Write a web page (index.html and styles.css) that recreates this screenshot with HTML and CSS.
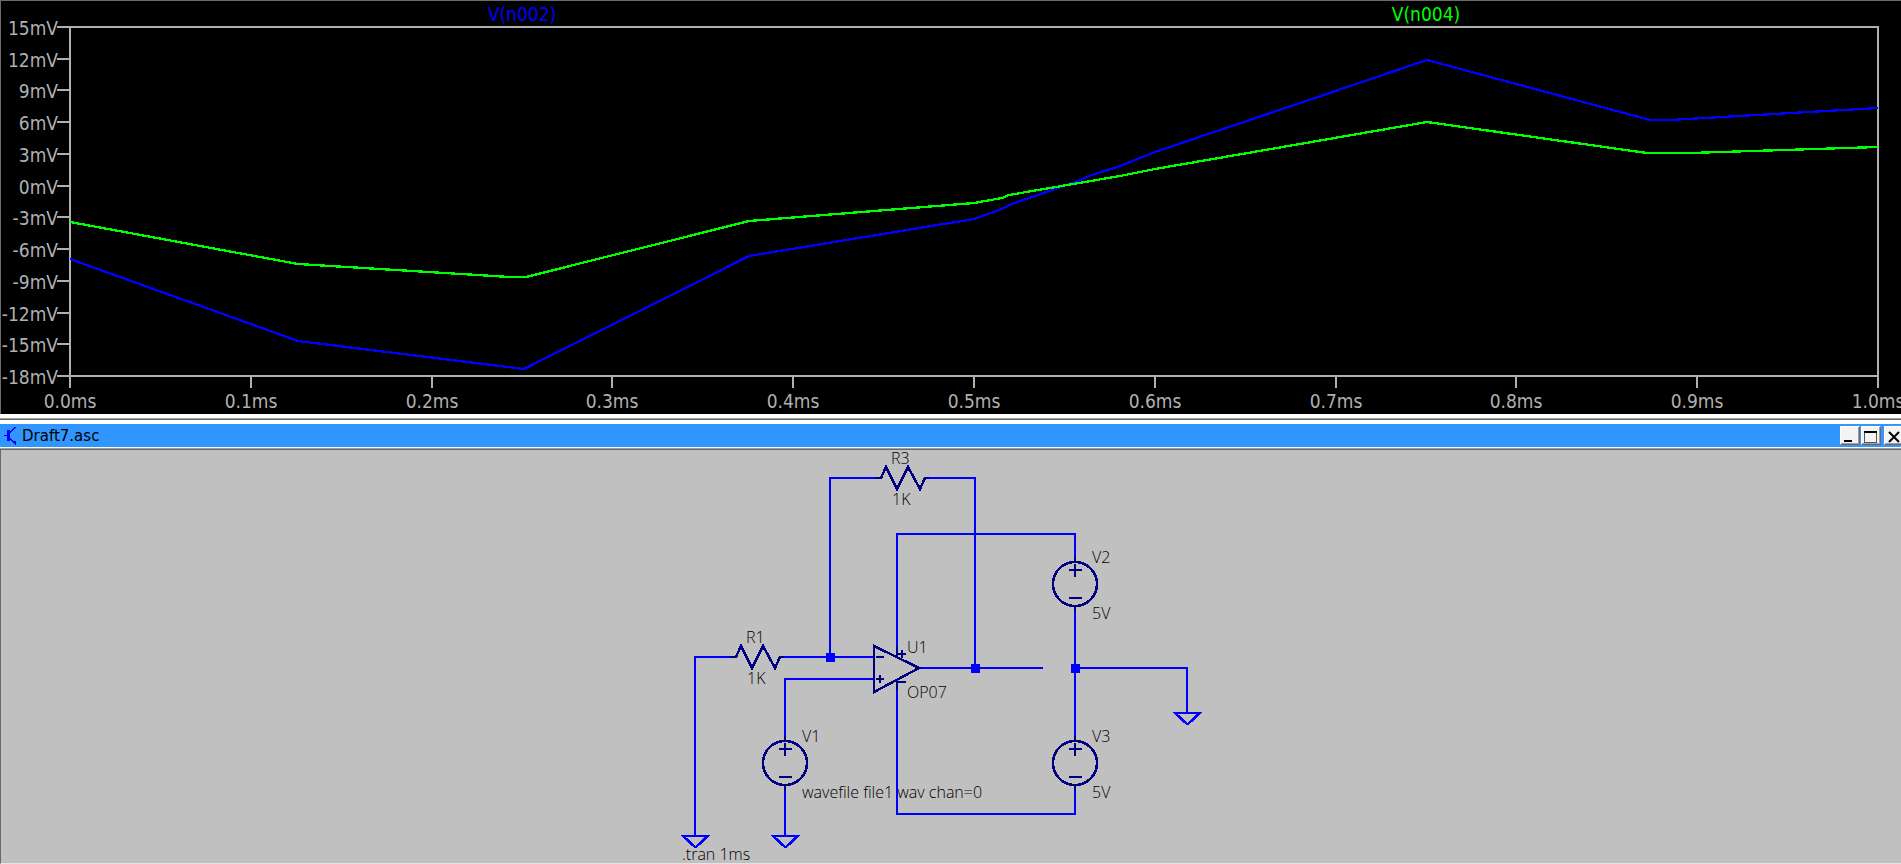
FILE: index.html
```html
<!DOCTYPE html>
<html lang="en">
<head>
<meta charset="utf-8">
<title>Draft7</title>
<link rel="stylesheet" href="styles.css">
</head>
<body>
<main class="workspace">
  <section class="plot-window" aria-label="Waveform plot">
    <svg class="plot" viewBox="1 1 1900 413" role="img" aria-label="V(n002) and V(n004) over 1 ms">
      <g class="axis">
        <path d="M57 27H1878V388M70 27V388M57 376H1878"/>
        <path d="M57 59H70M57 90H70M57 122H70M57 154H70M57 186H70M57 217H70M57 249H70M57 281H70M57 313H70M57 344H70"/>
        <path d="M251 376V388M432 376V388M612 376V388M793 376V388M974 376V388M1155 376V388M1336 376V388M1516 376V388M1697 376V388"/>
      </g>
      <g class="label y-label">
        <text x="58" y="35">15mV</text>
        <text x="58" y="67">12mV</text>
        <text x="58" y="98">9mV</text>
        <text x="58" y="130">6mV</text>
        <text x="58" y="162">3mV</text>
        <text x="58" y="194">0mV</text>
        <text x="58" y="225">-3mV</text>
        <text x="58" y="257">-6mV</text>
        <text x="58" y="289">-9mV</text>
        <text x="58" y="321">-12mV</text>
        <text x="58" y="352">-15mV</text>
        <text x="58" y="384">-18mV</text>
      </g>
      <g class="label x-label">
        <text x="70" y="408">0.0ms</text>
        <text x="251" y="408">0.1ms</text>
        <text x="432" y="408">0.2ms</text>
        <text x="612" y="408">0.3ms</text>
        <text x="793" y="408">0.4ms</text>
        <text x="974" y="408">0.5ms</text>
        <text x="1155" y="408">0.6ms</text>
        <text x="1336" y="408">0.7ms</text>
        <text x="1516" y="408">0.8ms</text>
        <text x="1697" y="408">0.9ms</text>
        <text x="1878" y="408">1.0ms</text>
      </g>
      <text class="label trace-name blue" x="522" y="21">V(n002)</text>
      <text class="label trace-name green" x="1426" y="21">V(n004)</text>
      <polyline class="trace trace-blue" points="70,259 298,341 524,369 749,256 974,219 1002,209 1009,205 1078,181 1089,176 1120,166 1155,152 1300,103 1427,60 1650,120 1670,120 1878,108"/>
      <polyline class="trace trace-green" points="70,222 298,264 510,277 526,277 749,221 974,203 1002,198 1009,195 1120,176 1155,169 1300,144 1427,122 1647,153 1690,153 1878,147"/>
    </svg>
  </section>

  <section class="schematic-window" aria-label="Schematic">
    <header class="title-bar">
      <svg class="app-icon" viewBox="0 0 14 20" aria-hidden="true">
        <path d="M1 9.500H5" stroke-width="1"/>
        <path d="M5.500 4V15" stroke-width="3"/>
        <path d="M7 7L12 1M7 12L12 18" stroke-width="1.500"/>
        <path class="solid" d="M8 15H13V20L11 18Z"/>
      </svg>
      <h1 class="title">Draft7.asc</h1>
      <div class="controls">
        <button type="button" class="control" aria-label="Minimize"><svg viewBox="0 0 17 16"><path class="thick" d="M3 13H11"/></svg></button>
        <button type="button" class="control" aria-label="Maximize"><svg viewBox="0 0 17 16"><path d="M2.500 4V14.500H14.500V4"/><path class="thick" d="M2 4H15"/></svg></button>
        <button type="button" class="control control-close" aria-label="Close"><svg viewBox="0 0 17 16"><path class="cross" d="M4 4L14 14M14 4L4 14"/></svg></button>
      </div>
    </header>
    <div class="sheet">
      <svg class="schematic" viewBox="1 450 1900 413" role="img" aria-label="OP07 amplifier circuit">
        <defs>
          <g id="source">
            <circle class="bold" r="22"/>
            <path d="M0 -27V-21M0 21V27M-6 -14H7M0 -20V-7M-6 14H7"/>
          </g>
          <g id="resistor">
            <path d="M-22 0H-16M28 0H32"/>
            <path class="bold" d="M-17 0H-16L-11 -11L0 11L11 -11L23 11L28 0H29"/>
          </g>
          <path id="ground" class="bold" d="M-12 0H13L1 11H0L-12 0Z"/>
          <rect id="node" x="-4" y="-4" width="9" height="9"/>
        </defs>
        <g class="note">
          <text x="891" y="464">R3</text>
          <text x="892" y="505">1K</text>
          <text x="746" y="643">R1</text>
          <text x="747" y="684">1K</text>
          <text x="907" y="653">U1</text>
          <text x="907" y="698">OP07</text>
          <text x="802" y="742">V1</text>
          <text x="802" y="798">wavefile file1 wav chan=0</text>
          <text x="682" y="860">.tran 1ms</text>
          <text x="1092" y="563">V2</text>
          <text x="1092" y="619">5V</text>
          <text x="1092" y="742">V3</text>
          <text x="1092" y="798">5V</text>
        </g>
        <g class="wire">
          <path d="M878 478H830V657M927 478H975V668"/>
          <path d="M897 650V534H1075V560M897 688V814H1075V787"/>
          <path d="M1075 608V740M1075 668H1187V713M917 668H1043"/>
          <path d="M733 657H695V836M782 657H873M873 679H785V740M785 787V836"/>
          <use href="#ground" x="695" y="836"/>
          <use href="#ground" x="785" y="836"/>
          <use href="#ground" x="1187" y="713"/>
        </g>
        <g class="part">
          <use href="#resistor" x="897" y="478"/>
          <use href="#resistor" x="752" y="657"/>
          <use href="#source" x="785" y="763"/>
          <use href="#source" x="1075" y="584"/>
          <use href="#source" x="1075" y="763"/>
          <path class="bold" d="M874 646V692L919 668L874 646Z"/>
          <path d="M897 647V657M897 679V690M876 657H884M876 679H884M880 675V683M897 654H906M902 650V658M897 682H906"/>
        </g>
        <g class="nodes">
          <use href="#node" x="830" y="657"/>
          <use href="#node" x="975" y="668"/>
          <use href="#node" x="1075" y="668"/>
        </g>
      </svg>
    </div>
  </section>
</main>
</body>
</html>
```
FILE: styles.css
```css
* {
  box-sizing: border-box;
}

body {
  margin: 0;
  background: #fff;
  overflow-x: hidden;
}

.workspace {
  display: flex;
  flex-direction: column;
}

.plot-window {
  background: #000;
  border-top: 1px solid #6b6b6b;
  border-left: 1px solid #6b6b6b;
}

.plot,
.schematic {
  display: block;
  width: 100%;
  height: auto;
  fill: none;
  stroke-width: 2;
  shape-rendering: crispEdges;
}

.axis {
  stroke: #b0b0b0;
}

.label {
  font: 19px "DejaVu Sans Condensed", "DejaVu Sans", sans-serif;
  fill: #b0b0b0;
}

.y-label {
  text-anchor: end;
}

.x-label,
.trace-name {
  text-anchor: middle;
}

.blue {
  fill: #00f;
}

.green {
  fill: #0f0;
}

.trace {
  stroke-width: 2.3;
}

.trace-blue {
  stroke: #00f;
}

.trace-green {
  stroke: #0f0;
}

.schematic-window {
  margin-top: 4px;
  border-top: 1px solid #a0a0a0;
  box-shadow: inset 0 1px #696969;
  padding-top: 5px;
}

.title-bar {
  display: flex;
  align-items: center;
  gap: 5px;
  height: 23px;
  padding-left: 3px;
  background: #3296ff;
  overflow: hidden;
}

.app-icon {
  width: 14px;
  height: 20px;
  fill: none;
  stroke: #00f;
  shape-rendering: crispEdges;
}

.solid {
  fill: #00f;
  stroke: none;
}

.title {
  flex: 1;
  margin: 0;
  font: 15px/20px "DejaVu Sans", sans-serif;
  color: #000;
}

.controls {
  display: flex;
  gap: 1px;
  margin-right: -3px;
}

.control {
  width: 20px;
  height: 19px;
  padding: 0;
  background: #f4f4f4;
  border: 1px solid;
  border-color: #fff #696969 #696969 #fff;
  box-shadow: inset -1px -1px #a0a0a0;
}

.control svg {
  display: block;
  width: 17px;
  height: 16px;
  fill: none;
  stroke: #555;
  shape-rendering: crispEdges;
}

.control .thick {
  stroke: #000;
  stroke-width: 2;
}

.control .cross {
  stroke: #000;
  stroke-width: 2;
  shape-rendering: auto;
}

.control-close {
  margin-left: 2px;
}

.sheet {
  margin-top: 2px;
  background: #c0c0c0;
  border-top: 1px solid #696969;
  border-left: 1px solid #696969;
  border-bottom: 1px solid #e3e3e3;
  box-shadow: 0 -1px #a0a0a0;
}

.note {
  font: 300 16px "Open Sans", "Noto Sans", sans-serif;
  fill: #000;
}

.wire {
  stroke: #00f;
}

.part {
  stroke: #000080;
}

.bold {
  stroke-width: 2.5;
}

.nodes {
  fill: #00f;
}
```
